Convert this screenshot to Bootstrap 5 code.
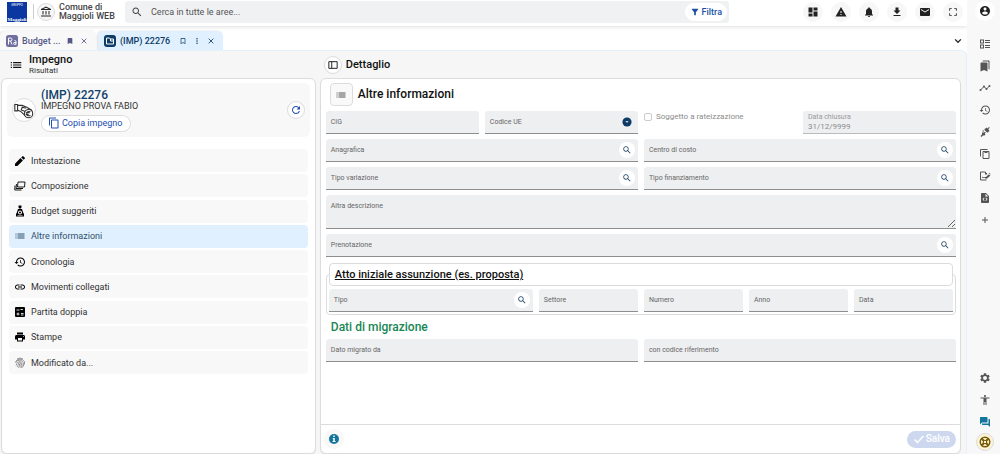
<!DOCTYPE html>
<html lang="it">
<head>
<meta charset="utf-8">
<meta name="viewport" content="width=device-width, initial-scale=1">
<title>Impegno - Dettaglio</title>
<link href="https://cdn.jsdelivr.net/npm/bootstrap@5.3.0/dist/css/bootstrap.min.css" rel="stylesheet">
<style>
  :root { --ink:#222; --navy:#0b3b66; --blue:#1d4fa5; --panel:#f6f6f6; --field:#eeeff1; --line:#dcdcdc; --sky:#e0f0ff; }
  body { font-family: Roboto, "Liberation Sans", sans-serif; font-size:10px; line-height:12px; color:var(--ink); background:#fff; }
  button { border:0; background:none; padding:0; color:inherit; line-height:inherit; }
  svg { display:block; flex:none; width:12px; height:12px; fill:currentColor; }
  .s10 { width:10px; height:10px; }
  .s8 { width:8px; height:8px; }
  .s14 { width:14px; height:14px; }
  .round-btn { width:20px; height:20px; flex:none; border-radius:50%; display:flex; align-items:center; justify-content:center; }
  .ringed { border:1px solid var(--line); background:#fff; width:18px; height:18px; }
  .topbar { height:26px; padding:0 4px 3px 7px; box-shadow:0 1px 4px #0002; }
  .topbar .round-btn { background:#f7f7f7; }
  .brand-logo { width:20px; height:20px; }
  .vline { width:1px; height:15px; background:#ccc; margin:0 3px 0 6px; }
  .org { font-size:9px; line-height:9px; width:66px; flex:none; font-weight:500; color:#444; margin-left:4px; }
  .searchbar { background:#f0f1f3; height:22px; border-radius:3px; padding:0 2px 0 6px; color:#444; width:604px; min-width:0; }
  .searchbar input { border:0; background:none; outline:0; min-width:0; font-size:9px; padding:0; margin-left:8px; color:#555; }
  .searchbar input::placeholder { color:#555; opacity:1; }
  .pill { border-radius:12px; background:#fff; }
  .filter { height:18px; padding:0 5px; color:var(--blue); font-size:9px; font-weight:500; gap:2px; }
  .tabs { padding-top:5px; height:24px; gap:2px; }
  .tab { height:19px; border-radius:5px 5px 0 0; font-size:9px; font-weight:500; color:#57588a; background:#f8f8f8; box-shadow:-1px 0 2px #0002; padding:0 8px 0 6px; gap:4px; }
  .tab.on { background:var(--sky); color:var(--navy); }
  .tab button + button { margin-left:2px; }
  .workspace { background:var(--panel); border:1px solid #e4f0fa; border-left:0; border-bottom:0; border-radius:0 6px 0 0; padding:0 5px 0 1px; gap:4px; }
  .left-pane { flex:0 0 calc(33% - 2px); }
  .pane-head { height:27px; font-size:11px; font-weight:500; color:#111; }
  .pane-head small { display:block; font-size:8px; line-height:9px; font-weight:400; color:#333; }
  .box { background:#fff; border:1px solid var(--line); border-radius:6px; box-shadow:0 1px 1px #0001; }
  .record { background:#f8f8f8; border-radius:6px; margin:4px 5px 0; padding:4px 5px 4px; min-height:54px; gap:5px; }
  .record h1 { font-size:12px; line-height:12px; font-weight:500; color:#123f6c; margin:0; }
  .record p { font-size:9px; line-height:11px; margin:0 0 3px; color:#333; }
  .copybtn { border:1px solid var(--line); height:17px; color:#234fb0; font-size:9px; padding:0 6px; gap:2px; width:90px; }
  .sections { margin:12px 7px 0; height:225px; }
  .sections a { height:23px; background:#f8f8f8; border-radius:4px; padding:0 5px; gap:5px; color:#333; text-decoration:none; font-size:9px; }
  .sections svg { color:#000; }
  .sections a.on { background:var(--sky); color:#31506d; }
  .sections a.on svg { color:#31506d; }
  .detail-title { font-size:12px; font-weight:500; color:#111; padding:4px 9px 0; height:32px; align-items:flex-start; gap:5px; line-height:22px; }
  .detail-title button { width:23px; height:23px; border:1px solid var(--line); border-radius:4px; background:#f9f9f9; color:#555; }
  .form-area { padding:0 4px 0 5px; }
  .form-area .row { --bs-gutter-x:6px; --bs-gutter-y:5px; }
  .form-area .row.gy-0 { --bs-gutter-y:0px; }
  .form-area .lead-row { margin-top:-5px; }
  .fld { height:23px; background:var(--field); border-bottom:1px solid #8e8e8e; border-radius:3px 3px 0 0; padding:0 3px 0 5px; font-size:7px; line-height:9px; color:#666; display:flex; align-items:center; }
  .fld input, .fld select, .fld textarea { border:0; background:none; outline:0; flex:1 1 0; min-width:0; padding:0; font-size:8px; line-height:9px; color:#555; appearance:none; }
  .fld .round-btn { width:16px; height:16px; background:#fff; color:#244a6c; }
  .fld.tall { height:34px; flex-direction:column; align-items:stretch; padding:7px 0 0 5px; }
  .fld.tall textarea { resize:vertical; }
  .fld.stacked { flex-direction:column; align-items:stretch; padding:2px 5px 0; color:#999; border-color:#bbb; }
  .fld.stacked input { color:#8b8b8b; flex:none; height:9px; }
  .check { font-size:8px; line-height:12px; color:#8b8b8b; gap:4px; }
  .check input { appearance:none; width:8px; height:8px; border:1px solid #ccc; border-radius:2px; background:#fff; margin:0; }
  fieldset { border:1px solid var(--line); border-radius:4px; padding:3px 2px 2px; margin:6px 0 0; }
  fieldset legend { float:none; border:1px solid var(--line); border-radius:4px; background:#fff; font-size:11px; line-height:21px; font-weight:500; text-decoration:underline; padding:0 5px; margin:0; color:#111; }
  h2.migr { font-size:12px; line-height:24px; font-weight:500; color:#198754; margin:0; padding-left:5px; }
  .foot { border-top:1px solid var(--line); height:29px; padding:0 4px 0 3px; }
  .save { background:#cdd8ee; color:#fff; height:17px; padding:0 6px; gap:1px; font-weight:500; font-size:10px; }
  .rail { width:33px; background:#f8f8f8; flex:none; padding:1px 0 3px 2px; color:#555; }
  .rail button { height:22px; width:20px; }
  .rail .round-btn { height:20px; background:#fff; color:#222; margin-bottom:12px; }
  .rail .ringed { height:18px; width:18px; background:#fdf5d5; color:#775c08; }
</style>
</head>
<body>
<svg style="display:none" aria-hidden="true">
  <symbol id="list" viewBox="0 0 24 24"><path d="M3 13h2v-2H3v2zm0 4h2v-2H3v2zm0-8h2V7H3v2zm4 4h14v-2H7v2zm0 4h14v-2H7v2zM7 7v2h14V7H7z"/></symbol>
  <symbol id="bank" viewBox="0 0 24 24"><path d="M5 10v7h2v-7H5zm6 0v7h2v-7h-2zM2 21h20v-2H2v2zm15-11v7h2v-7h-2zM12 1 2 6v2h20V6L12 1zm0 2.3L17.5 6h-11z"/></symbol>
  <symbol id="search" viewBox="0 0 24 24"><path d="M15.500 14h-.79l-.28-.27C15.410 12.590 16 11.110 16 9.500 16 5.910 13.090 3 9.500 3S3 5.910 3 9.500 5.910 16 9.500 16c1.610 0 3.090-.59 4.230-1.570l.27.28v.79l5 4.990L20.490 19l-4.990-5zm-6 0C7.010 14 5 11.990 5 9.500S7.010 5 9.500 5 14 7.010 14 9.500 11.990 14 9.500 14z"/></symbol>
  <symbol id="filter" viewBox="0 0 24 24"><path d="M4.250 5.610C6.270 8.200 10 13 10 13v6c0 .55.45 1 1 1h2c.55 0 1-.45 1-1v-6s3.720-4.800 5.740-7.390A1 1 0 0 0 18.950 4H5.040c-.83 0-1.300.95-.79 1.610z"/></symbol>
  <symbol id="dash" viewBox="0 0 24 24"><path d="M3 13h8V3H3v10zm0 8h8v-6H3v6zm10 0h8V11h-8v10zm0-18v6h8V3h-8z"/></symbol>
  <symbol id="warn" viewBox="0 0 24 24"><path d="M1 21h22L12 2 1 21zm12-3h-2v-2h2v2zm0-4h-2v-4h2v4z"/></symbol>
  <symbol id="bell" viewBox="0 0 24 24"><path d="M12 22c1.100 0 2-.9 2-2h-4c0 1.100.89 2 2 2zm6-6v-5c0-3.070-1.640-5.640-4.500-6.320V4c0-.83-.67-1.500-1.500-1.500s-1.500.67-1.500 1.500v.68C7.630 5.360 6 7.920 6 11v5l-2 2v1h16v-1l-2-2z"/></symbol>
  <symbol id="down" viewBox="0 0 24 24"><path d="M19 9h-4V3H9v6H5l7 7 7-7zM5 18v2h14v-2H5z"/></symbol>
  <symbol id="mail" viewBox="0 0 24 24"><path d="M20 4H4c-1.100 0-2 .9-2 2v12c0 1.100.9 2 2 2h16c1.100 0 2-.9 2-2V6c0-1.100-.9-2-2-2zm0 4l-8 5-8-5V6l8 5 8-5v2z"/></symbol>
  <symbol id="full" viewBox="0 0 24 24"><path d="M5 15H3v6h6v-2H5v-4zM3 9h2V5h4V3H3v6zm16 10h-4v2h6v-6h-2v4zM15 3v2h4v4h2V3h-6z"/></symbol>
  <symbol id="user" viewBox="0 0 24 24"><path d="M12 2C6.480 2 2 6.480 2 12s4.480 10 10 10 10-4.480 10-10S17.520 2 12 2zm0 3c1.660 0 3 1.340 3 3s-1.340 3-3 3-3-1.340-3-3 1.340-3 3-3zm0 14.200c-2.500 0-4.710-1.280-6-3.220.03-1.990 4-3.080 6-3.080 1.990 0 5.970 1.090 6 3.080-1.290 1.940-3.500 3.220-6 3.220z"/></symbol>
  <symbol id="ballot" viewBox="0 0 24 24"><path d="M2 3h8v8H2V3zm2 2v4h4V5H4zm-2 8h8v8H2v-8zm2 2v4h4v-4H4zM12 4h10v2H12zM12 8h10v2H12zM12 14h10v2H12zM12 18h10v2H12z" fill-rule="evenodd"/></symbol>
  <symbol id="marks" viewBox="0 0 24 24"><path d="M19 18l2 1V3c0-1.100-.9-2-2-2H9C7.900 1 7 1.900 7 3h10c1.100 0 2 .9 2 2v13zM15 5H5c-1.100 0-2 .9-2 2v16l7-3 7 3V7c0-1.100-.9-2-2-2z"/></symbol>
  <symbol id="trend" viewBox="0 0 24 24"><path d="M3 16l7-7 5 5 6-6" fill="none" stroke="currentColor" stroke-width="2"/><circle cx="3" cy="16" r="2"/><circle cx="10" cy="9" r="2"/><circle cx="15" cy="14" r="2"/><circle cx="21" cy="8" r="2"/></symbol>
  <symbol id="history" viewBox="0 0 24 24"><path d="M13 3c-4.970 0-9 4.030-9 9H1l3.890 3.890.07.14L9 12H6c0-3.870 3.130-7 7-7s7 3.130 7 7-3.130 7-7 7c-1.930 0-3.680-.79-4.940-2.060l-1.420 1.420C8.270 19.990 10.510 21 13 21c4.970 0 9-4.030 9-9s-4.030-9-9-9zm-1 5v5l4.280 2.540.72-1.210-3.500-2.080V8H12z"/></symbol>
  <symbol id="plug" viewBox="0 0 24 24"><path d="M12 6l2-2 2 2 3-3 1.500 1.500-3 3L20 10l-3 4h-2l-5-5V7zM7 9l2 2-2 2 1.500 1.500 2-2 2 2-2 2L12 18l-2 2H7l-3 3-2-2 3-3v-3l2-2-1-2z" transform="translate(1 -1)"/></symbol>
  <symbol id="copy" viewBox="0 0 24 24"><path d="M16 1H4c-1.100 0-2 .9-2 2v14h2V3h12V1zm3 4H8c-1.100 0-2 .9-2 2v14c0 1.100.9 2 2 2h11c1.100 0 2-.9 2-2V7c0-1.100-.9-2-2-2zm0 16H8V7h11v14z"/></symbol>
  <symbol id="paste" viewBox="0 0 24 24"><path d="M3 17V3h14M8 7h12v14H8z" fill="none" stroke="currentColor" stroke-width="2"/><path d="M11 6h6v4h-6z"/></symbol>
  <symbol id="sign" viewBox="0 0 24 24"><path d="M15 20H3V4h9l4 4M6 16c2-4 3 1 5-1h3" fill="none" stroke="currentColor" stroke-width="2"/><path d="M12 3v6h5zM13 15l6-6 4 2-7 6-3 1zM19 7l3-1 1 3z"/></symbol>
  <symbol id="doc" viewBox="0 0 24 24"><path fill-rule="evenodd" d="M6 2h8l6 6v12c0 1.100-.9 2-2 2H6c-1.100 0-2-.9-2-2V4c0-1.100.9-2 2-2zm7 1.500V9h5.500zM10 11l-3 3.500 3 3.500 1-1-2-2.500 2-2.500zm4 0-1 1 2 2.500-2 2.500 1 1 3-3.500z"/></symbol>
  <symbol id="plus" viewBox="0 0 24 24"><path d="M18 13h-5v5h-2v-5H6v-2h5V6h2v5h5z"/></symbol>
  <symbol id="gear" viewBox="0 0 24 24"><path d="M19.140 12.940c.04-.3.06-.61.06-.94 0-.32-.02-.64-.07-.94l2.030-1.580c.18-.14.23-.41.12-.61l-1.920-3.320c-.12-.22-.37-.29-.59-.22l-2.390.96c-.5-.38-1.030-.7-1.620-.94l-.36-2.540c-.04-.24-.24-.41-.48-.41h-3.840c-.24 0-.43.17-.47.41l-.36 2.540c-.59.24-1.130.57-1.620.94l-2.390-.96c-.22-.08-.47 0-.59.22L2.740 8.870c-.12.21-.08.47.12.61l2.030 1.580c-.05.3-.09.63-.09.94s.02.64.07.94l-2.030 1.580c-.18.14-.23.41-.12.61l1.920 3.320c.12.22.37.29.59.22l2.390-.96c.5.38 1.030.7 1.620.94l.36 2.540c.05.24.24.41.48.41h3.840c.24 0 .44-.17.47-.41l.36-2.540c.59-.24 1.130-.56 1.620-.94l2.390.96c.22.08.47 0 .59-.22l1.920-3.320c.12-.22.07-.47-.12-.61l-2.010-1.580zM12 16a4 4 0 1 1 0-8 4 4 0 0 1 0 8z"/></symbol>
  <symbol id="access" viewBox="0 0 24 24"><path d="M12 2c1.100 0 2 .9 2 2s-.9 2-2 2-2-.9-2-2 .9-2 2-2zm9 7h-6v13h-2v-6h-2v6H9V9H3V7h18v2z"/></symbol>
  <symbol id="chat" viewBox="0 0 24 24"><path d="M21 6h-2v9H6v2c0 .55.45 1 1 1h11l4 4V7c0-.55-.45-1-1-1zm-4 6V3c0-.55-.45-1-1-1H3c-.55 0-1 .45-1 1v14l4-4h10c.55 0 1-.45 1-1z"/></symbol>
  <symbol id="buoy" viewBox="0 0 24 24"><circle cx="12" cy="12" r="9.500" fill="none" stroke="currentColor" stroke-width="3"/><circle cx="12" cy="12" r="3.500" fill="none" stroke="currentColor" stroke-width="2"/><path d="M5 5l5 5M19 5l-5 5M5 19l5-5M19 19l-5-5" stroke="currentColor" stroke-width="4"/></symbol>
  <symbol id="mark" viewBox="0 0 24 24"><path d="M17 3H7c-1.100 0-2 .9-2 2v16l7-3 7 3V5c0-1.100-.9-2-2-2z"/></symbol>
  <symbol id="markline" viewBox="0 0 24 24"><path d="M17 3H7c-1.100 0-2 .9-2 2v16l7-3 7 3V5c0-1.100-.9-2-2-2zm0 15l-5-2.180L7 18V5h10v13z"/></symbol>
  <symbol id="close" viewBox="0 0 24 24"><path d="M5 5l14 14M19 5L5 19" stroke="currentColor" stroke-width="2.500"/></symbol>
  <symbol id="dots" viewBox="0 0 24 24"><circle cx="12" cy="5" r="2.200"/><circle cx="12" cy="12" r="2.200"/><circle cx="12" cy="19" r="2.200"/></symbol>
  <symbol id="chev" viewBox="0 0 24 24"><path d="M5 8l7 7 7-7" fill="none" stroke="currentColor" stroke-width="3"/></symbol>
  <symbol id="pane" viewBox="0 0 24 24"><path d="M2 4h20v16H2zM9 4v16" fill="none" stroke="currentColor" stroke-width="2.200"/></symbol>
  <symbol id="refresh" viewBox="0 0 24 24"><path d="M17.650 6.350C16.200 4.900 14.210 4 12 4c-4.420 0-8 3.580-8 8s3.570 8 8 8c3.730 0 6.840-2.550 7.730-6h-2.080c-.82 2.330-3.040 4-5.650 4-3.310 0-6-2.690-6-6s2.690-6 6-6c1.660 0 3.140.69 4.220 1.780L13 11h7V4l-2.350 2.350z"/></symbol>
  <symbol id="edit" viewBox="0 0 24 24"><path d="M2 17.250V22h4.750L17.810 10.940l-4.750-4.750L2 17.250zM21.710 7.040c.39-.39.39-1.020 0-1.410l-3.340-3.340c-.39-.39-1.020-.39-1.410 0l-2.500 2.500 4.750 4.750z"/></symbol>
  <symbol id="layers" viewBox="0 0 24 24"><path d="M8 4h14l-1 10H7zM5 8 4 17h14M2 11l-.5 9H15" fill="none" stroke="currentColor" stroke-width="1.800"/></symbol>
  <symbol id="bag" viewBox="0 0 24 24"><path fill-rule="evenodd" d="M9 1h6v3l-1 3h-4L9 4zM8 8h8l3 9h1v6H4v-6h1zm4 3a4 4 0 1 0 0 8 4 4 0 0 0 0-8zm0 2a2 2 0 1 1 0 4 2 2 0 0 1 0-4zM7 20v1h10v-1z"/></symbol>
  <symbol id="link" viewBox="0 0 24 24"><path d="M3.900 12c0-1.710 1.390-3.100 3.100-3.100h4V7H7c-2.760 0-5 2.240-5 5s2.240 5 5 5h4v-1.900H7c-1.710 0-3.100-1.390-3.100-3.100zM8 13h8v-2H8v2zm9-6h-4v1.900h4c1.710 0 3.100 1.390 3.100 3.100s-1.390 3.100-3.100 3.100h-4V17h4c2.760 0 5-2.240 5-5s-2.240-5-5-5z"/></symbol>
  <symbol id="calc" viewBox="0 0 24 24"><rect x="2" y="2" width="20" height="20" rx="2"/><path d="M5 8h6M13 7h5M14 15h5M14 18h5M5 16h6M8 13v6" stroke="#fff" stroke-width="1.700"/></symbol>
  <symbol id="print" viewBox="0 0 24 24"><path d="M19 8H5c-1.660 0-3 1.340-3 3v6h4v4h12v-4h4v-6c0-1.660-1.340-3-3-3zm-3 11H8v-5h8v5zm3-7c-.55 0-1-.45-1-1s.45-1 1-1 1 .45 1 1-.45 1-1 1zm-1-9H6v4h12V3z"/></symbol>
  <symbol id="finger" viewBox="0 0 24 24"><path d="M6 4q6-4 12 0M3 9q9-10 18 0v6M3 12q0-5 9-6 8 2 7 13M4 17q2-8 8-8 5 2 4 13M6 20q3-4 3-7 3-4 5 1v8M9 22q3-4 2-8" fill="none" stroke="#777" stroke-width="1.500"/></symbol>
  <symbol id="hand" viewBox="0 0 24 24"><g fill="none" stroke="#333" stroke-width="1.200"><path d="M2 6v7h3V6zM5 7h5l5 2 5 3 1 2M5 12l4 2 5 5M14 10l-4-1-1 3 3 1 2 1"/><circle cx="17" cy="16" r="4.500" fill="#fff"/><path d="M19 14q-4-1-4 2t4 2M14 15h4M14 17h3"/></g></symbol>
  <symbol id="caret" viewBox="0 0 24 24"><circle cx="12" cy="12" r="11"/><path d="M8 10h8l-4 4z" fill="#fff"/></symbol>
  <symbol id="info" viewBox="0 0 24 24"><circle cx="12" cy="12" r="10"/><path d="M10.500 5h3v3h-3zM9.500 10h4v6H15v2H9v-2h1.500v-4h-1z" fill="#fff"/></symbol>
  <symbol id="check" viewBox="0 0 24 24"><path d="M3 13l6 6L21 6" fill="none" stroke="currentColor" stroke-width="3"/></symbol>
  <symbol id="tabra" viewBox="0 0 24 24"><rect width="24" height="24" rx="5" fill="#716f9f"/><path d="M5 19V6h4q3 0 3 3t-3 3H5M9 12l3 7M20 19v-6q0-2-3-2M20 15q-5-1-5 2t5 1" fill="none" stroke="#fff" stroke-width="2"/></symbol>
  <symbol id="tabimp" viewBox="0 0 24 24"><rect width="24" height="24" rx="6" fill="#0b3b66"/><path d="M5 6h6l2 2h6v10H5zM13 8v4h6" fill="none" stroke="#fff" stroke-width="2"/></symbol>
</svg>

<div class="d-flex min-vh-100">
  <div class="d-flex flex-column flex-grow-1" style="min-width:0">
    <header class="topbar d-flex align-items-center">
      <svg class="brand-logo" viewBox="0 0 20 20" role="img" aria-label="Maggioli"><rect width="20" height="20" fill="#0a37a0"/><text x="10" y="4" font-size="3" text-anchor="middle" fill="#fff">GRUPPO</text><text x="10" y="19" font-size="5" font-family="Liberation Serif" font-weight="bold" text-anchor="middle" fill="#fff">Maggioli</text></svg>
      <span class="vline"></span>
      <span class="round-btn ringed"><svg><use href="#bank"/></svg></span>
      <div class="org">Comune di<br>Maggioli WEB</div>
      <div class="searchbar d-flex align-items-center">
        <svg><use href="#search"/></svg>
        <input class="flex-grow-1" type="search" placeholder="Cerca in tutte le aree..." aria-label="Cerca in tutte le aree">
        <button class="pill filter d-flex align-items-center"><svg class="s10"><use href="#filter"/></svg>Filtra</button>
      </div>
      <nav class="d-flex ms-auto gap-2" aria-label="Strumenti">
        <button class="round-btn" aria-label="Cruscotto"><svg><use href="#dash"/></svg></button>
        <button class="round-btn" aria-label="Avvisi"><svg><use href="#warn"/></svg></button>
        <button class="round-btn" aria-label="Notifiche"><svg><use href="#bell"/></svg></button>
        <button class="round-btn" aria-label="Scarica"><svg><use href="#down"/></svg></button>
        <button class="round-btn" aria-label="Messaggi"><svg><use href="#mail"/></svg></button>
        <button class="round-btn" aria-label="Schermo intero"><svg class="s10"><use href="#full"/></svg></button>
      </nav>
    </header>
    <div class="tabs d-flex align-items-center">
      <div class="tab d-flex align-items-center" style="width:96px"><svg><use href="#tabra"/></svg><span class="me-auto">Budget ...</span><button aria-label="Segnalibro"><svg class="s8"><use href="#mark"/></svg></button><button aria-label="Chiudi"><svg class="s8"><use href="#close"/></svg></button></div>
      <div class="tab on d-flex align-items-center" style="width:125px"><svg><use href="#tabimp"/></svg><span class="me-auto">(IMP) 22276</span><button aria-label="Segnalibro"><svg class="s8"><use href="#markline"/></svg></button><button aria-label="Altro"><svg class="s8"><use href="#dots"/></svg></button><button aria-label="Chiudi"><svg class="s8"><use href="#close"/></svg></button></div>
      <button class="ms-auto me-1" aria-label="Elenco schede"><svg class="s10"><use href="#chev"/></svg></button>
    </div>

    <main class="workspace d-flex flex-grow-1">
      <section class="left-pane d-flex flex-column">
        <div class="pane-head d-flex align-items-center ps-2" style="gap:6px"><svg class="s14"><use href="#list"/></svg><div>Impegno<small>Risultati</small></div></div>
        <div class="box flex-grow-1">
          <div class="record d-flex align-items-center">
            <span class="round-btn ringed" style="width:24px;height:24px"><svg style="width:22px;height:22px"><use href="#hand"/></svg></span>
            <div class="flex-grow-1">
              <h1>(IMP) 22276</h1>
              <p>IMPEGNO PROVA FABIO</p>
              <button class="pill copybtn d-flex align-items-center"><svg><use href="#copy"/></svg>Copia impegno</button>
            </div>
            <button class="round-btn ringed" aria-label="Aggiorna"><svg style="color:#234fb0"><use href="#refresh"/></svg></button>
          </div>
          <nav class="sections d-flex flex-column justify-content-between">
            <a href="#" class="d-flex align-items-center"><svg><use href="#edit"/></svg>Intestazione</a>
            <a href="#" class="d-flex align-items-center"><svg><use href="#layers"/></svg>Composizione</a>
            <a href="#" class="d-flex align-items-center"><svg><use href="#bag"/></svg>Budget suggeriti</a>
            <a href="#" class="d-flex align-items-center on"><svg><use href="#list"/></svg>Altre informazioni</a>
            <a href="#" class="d-flex align-items-center"><svg><use href="#history"/></svg>Cronologia</a>
            <a href="#" class="d-flex align-items-center"><svg><use href="#link"/></svg>Movimenti collegati</a>
            <a href="#" class="d-flex align-items-center"><svg><use href="#calc"/></svg>Partita doppia</a>
            <a href="#" class="d-flex align-items-center"><svg><use href="#print"/></svg>Stampe</a>
            <a href="#" class="d-flex align-items-center"><svg><use href="#finger"/></svg>Modificato da...</a>
          </nav>
        </div>
      </section>

      <section class="d-flex flex-column flex-grow-1">
        <div class="pane-head d-flex align-items-center ps-1 gap-1"><button class="round-btn ringed" aria-label="Riquadro"><svg class="s10"><use href="#pane"/></svg></button>Dettaglio</div>
        <div class="box flex-grow-1 d-flex flex-column">
          <div class="detail-title d-flex"><button class="d-flex align-items-center justify-content-center" aria-label="Menu"><svg><use href="#list"/></svg></button>Altre informazioni</div>
          <form class="form-area">
            <div class="row lead-row">
              <div class="col-3"><div class="fld"><label for="cig">CIG</label><input id="cig"></div></div>
              <div class="col-3"><div class="fld pe-1"><label for="ue">Codice UE</label><select id="ue"><option></option></select><svg style="color:#0b3b66;margin-right:2px" class="s10"><use href="#caret"/></svg></div></div>
              <div class="col-3"><div class="check d-flex align-items-center"><input id="rate" type="checkbox" disabled><label for="rate">Soggetto a rateizzazione</label></div></div>
              <div class="col-3"><div class="fld stacked"><label for="dc">Data chiusura</label><input id="dc" value="31/12/9999" disabled></div></div>
              <div class="col-6"><div class="fld"><label for="an">Anagrafica</label><input id="an"><button type="button" class="round-btn" aria-label="Cerca"><svg class="s10"><use href="#search"/></svg></button></div></div>
              <div class="col-6"><div class="fld"><label for="cc">Centro di costo</label><input id="cc"><button type="button" class="round-btn" aria-label="Cerca"><svg class="s10"><use href="#search"/></svg></button></div></div>
              <div class="col-6"><div class="fld"><label for="tv">Tipo variazione</label><input id="tv"><button type="button" class="round-btn" aria-label="Cerca"><svg class="s10"><use href="#search"/></svg></button></div></div>
              <div class="col-6"><div class="fld"><label for="tf">Tipo finanziamento</label><input id="tf"><button type="button" class="round-btn" aria-label="Cerca"><svg class="s10"><use href="#search"/></svg></button></div></div>
              <div class="col-12"><div class="fld tall"><label for="ad">Altra descrizione</label><textarea id="ad"></textarea></div></div>
              <div class="col-12"><div class="fld"><label for="pr">Prenotazione</label><input id="pr"><button type="button" class="round-btn" aria-label="Cerca"><svg class="s10"><use href="#search"/></svg></button></div></div>
            </div>
            <fieldset>
              <legend>Atto iniziale assunzione (es. proposta)</legend>
              <div class="row gy-0">
                <div class="col-4"><div class="fld"><label for="ti">Tipo</label><input id="ti"><button type="button" class="round-btn" aria-label="Cerca"><svg class="s10"><use href="#search"/></svg></button></div></div>
                <div class="col-2"><div class="fld"><label for="se">Settore</label><input id="se"></div></div>
                <div class="col-2"><div class="fld"><label for="nu">Numero</label><input id="nu"></div></div>
                <div class="col-2"><div class="fld"><label for="aa">Anno</label><input id="aa"></div></div>
                <div class="col-2"><div class="fld"><label for="da">Data</label><input id="da"></div></div>
              </div>
            </fieldset>
            <h2 class="migr">Dati di migrazione</h2>
            <div class="row gy-0">
              <div class="col-6"><div class="fld"><label for="dm">Dato migrato da</label><input id="dm"></div></div>
              <div class="col-6"><div class="fld"><label for="cr">con codice riferimento</label><input id="cr"></div></div>
            </div>
          </form>
          <div class="foot mt-auto d-flex align-items-center justify-content-between">
            <button class="round-btn" style="color:#12769c;background:#f8f8f8" aria-label="Informazioni"><svg><use href="#info"/></svg></button>
            <button class="pill save d-flex align-items-center" disabled><svg><use href="#check"/></svg>Salva</button>
          </div>
        </div>
      </section>
    </main>
  </div>
  <aside class="rail d-flex flex-column align-items-center">
    <button class="round-btn" aria-label="Profilo"><svg><use href="#user"/></svg></button>
    <button class="d-flex align-items-center justify-content-center" aria-label="Attività"><svg><use href="#ballot"/></svg></button>
    <button class="d-flex align-items-center justify-content-center" aria-label="Segnalibri"><svg><use href="#marks"/></svg></button>
    <button class="d-flex align-items-center justify-content-center" aria-label="Andamento"><svg><use href="#trend"/></svg></button>
    <button class="d-flex align-items-center justify-content-center" aria-label="Cronologia"><svg><use href="#history"/></svg></button>
    <button class="d-flex align-items-center justify-content-center" aria-label="Connessioni"><svg><use href="#plug"/></svg></button>
    <button class="d-flex align-items-center justify-content-center" aria-label="Appunti"><svg><use href="#paste"/></svg></button>
    <button class="d-flex align-items-center justify-content-center" aria-label="Firma"><svg><use href="#sign"/></svg></button>
    <button class="d-flex align-items-center justify-content-center" aria-label="Documenti"><svg><use href="#doc"/></svg></button>
    <button class="d-flex align-items-center justify-content-center" aria-label="Aggiungi"><svg><use href="#plus"/></svg></button>
    <button class="d-flex align-items-center justify-content-center mt-auto" aria-label="Impostazioni"><svg><use href="#gear"/></svg></button>
    <button class="d-flex align-items-center justify-content-center" aria-label="Accessibilità"><svg><use href="#access"/></svg></button>
    <button class="d-flex align-items-center justify-content-center" style="color:#12769c" aria-label="Chat"><svg><use href="#chat"/></svg></button>
    <button class="round-btn ringed mb-0" aria-label="Assistenza"><svg><use href="#buoy"/></svg></button>
  </aside>
</div>
<script src="https://cdn.jsdelivr.net/npm/bootstrap@5.3.0/dist/js/bootstrap.bundle.min.js"></script>
</body>
</html>
